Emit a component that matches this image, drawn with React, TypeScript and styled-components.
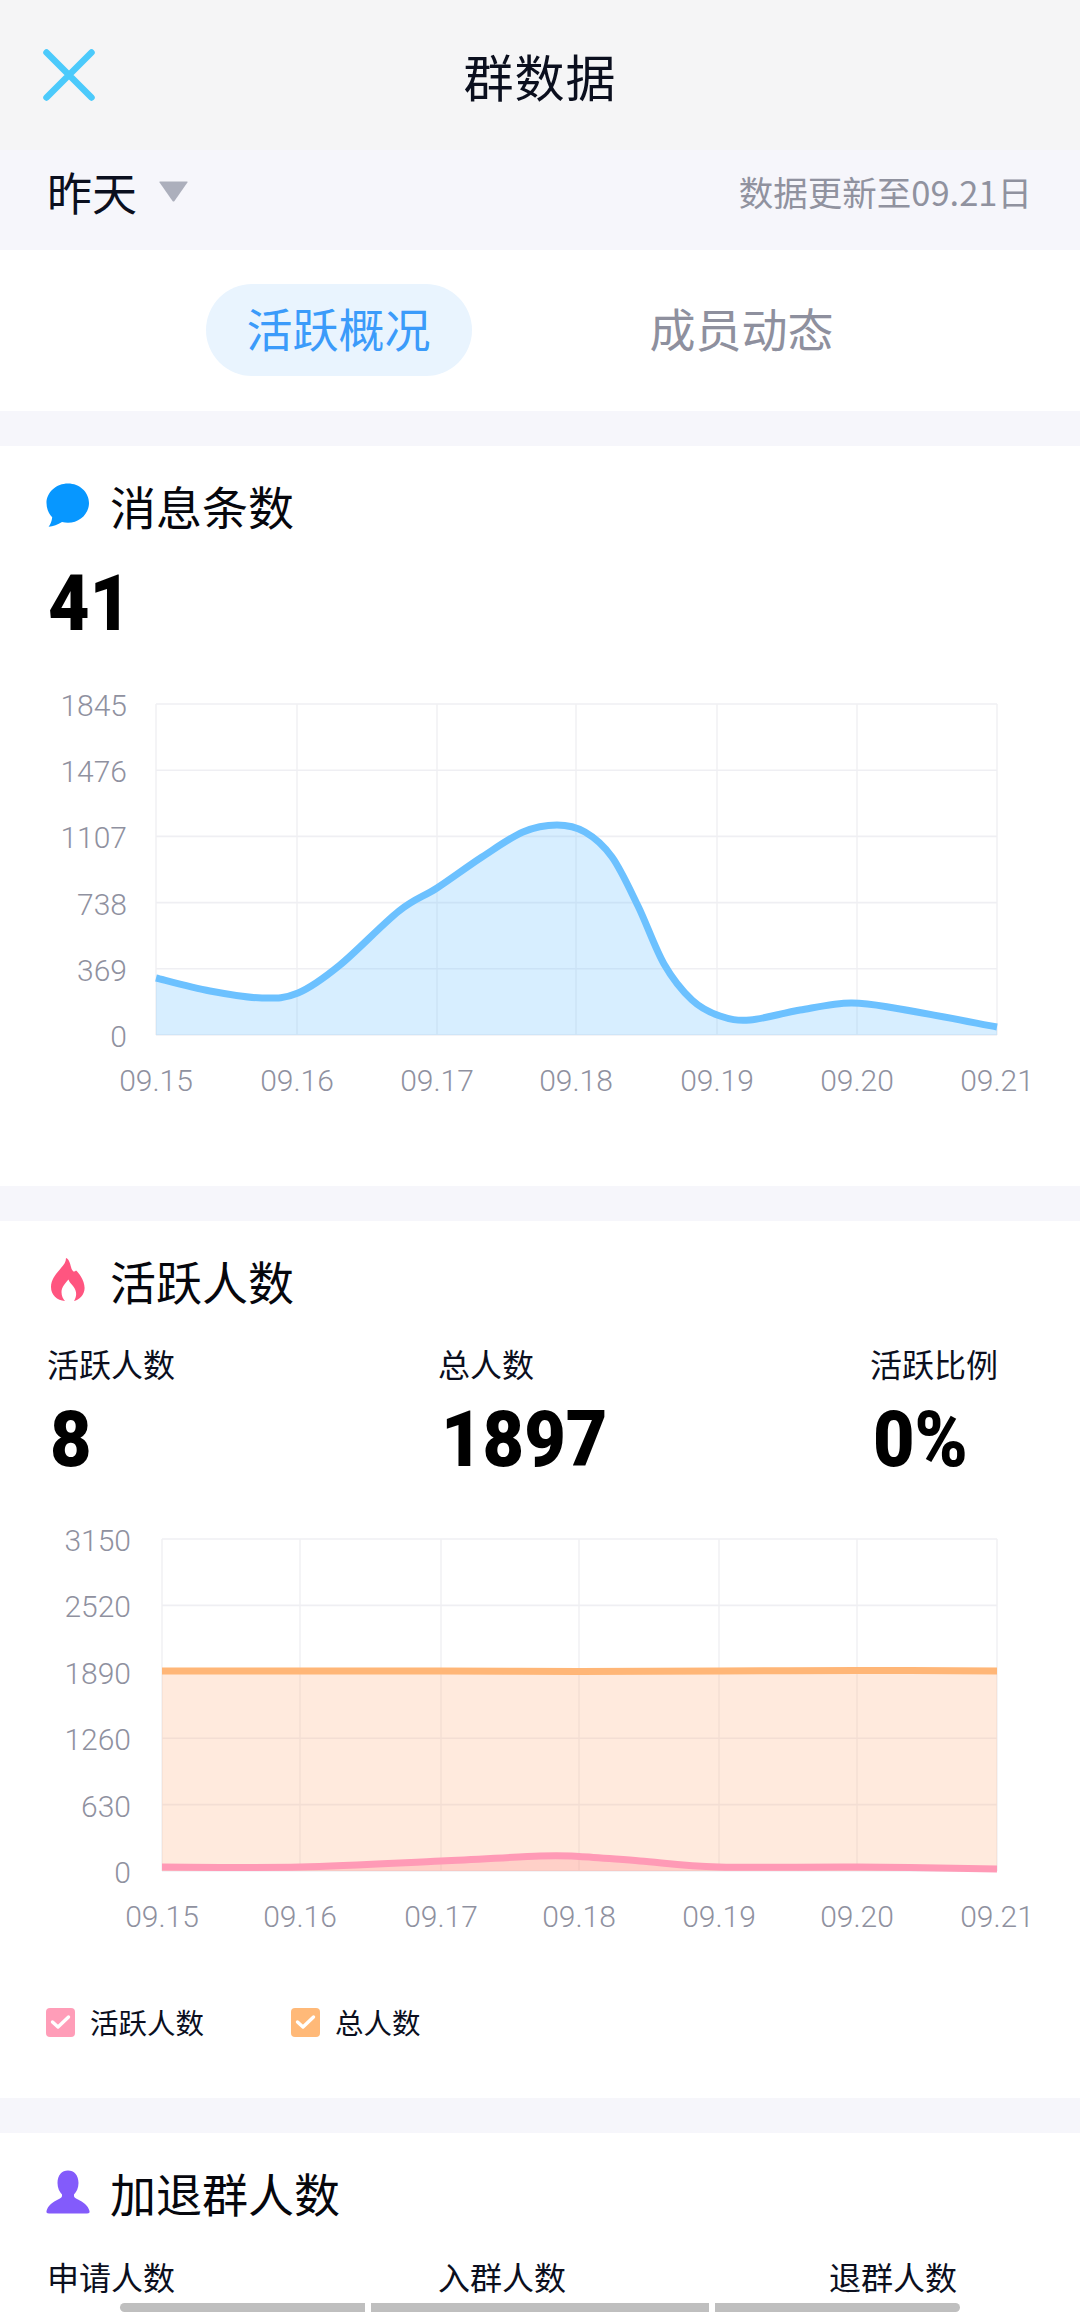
import React from 'react';
import styled, { createGlobalStyle } from 'styled-components';

const CJK = '"Noto Sans CJK SC", "Noto Sans", sans-serif';
const NUM = 'Roboto, "Liberation Sans", sans-serif';
const AXIS = 'Roboto, "Liberation Sans", sans-serif';

const Global = createGlobalStyle`
  html, body { margin: 0; padding: 0; background: #fff; }
  body { font-family: ${CJK}; color: #0b0f1e; }
  #root { width: 1080px; height: 2312px; overflow: hidden; }
`;

const Page = styled.div`
  position: relative;
  width: 1080px;
  height: 2312px;
  overflow: hidden;
  background: #f6f6fb;
`;
const Header = styled.header`
  height: 150px;
  background: #f5f5f6;
  display: flex;
  align-items: center;
  justify-content: center;
  position: relative;
`;
const CloseBtn = styled.button`
  position: absolute;
  left: 43px;
  top: 49px;
  width: 52px;
  height: 52px;
  padding: 0;
  border: 0;
  background: none;
  display: block;
`;
const HeaderTitle = styled.h1`
  margin: 0;
  font-size: 50px;
  letter-spacing: 1px;
  font-weight: 400;
  line-height: 1;
  color: #0b0f1e;
`;
const DateBar = styled.div`
  height: 100px;
  padding: 0 48px 0 47px;
  display: flex;
  align-items: center;
  justify-content: space-between;
  background: #f6f6fb;
`;
const DatePick = styled.div`
  display: flex;
  align-items: center;
  gap: 22px;
  font-size: 45px;
  line-height: 1;
  margin-bottom: 18px;
`;
const Caret = styled.svg`
  width: 29px;
  height: 21px;
  display: block;
`;
const UpdateNote = styled.span`
  font-size: 34.5px;
  color: #90929f;
  line-height: 1;
  margin-bottom: 18px;
`;
const Tabs = styled.nav`
  height: 161px;
  background: #fff;
  display: flex;
  justify-content: center;
  align-items: flex-start;
  padding-top: 34px;
  box-sizing: border-box;
  gap: 137px;
`;
const Tab = styled.div<{ $active?: boolean }>`
  height: 92px;
  box-sizing: border-box;
  padding: 0 41px 7px;
  border-radius: 46px;
  display: flex;
  align-items: center;
  font-size: 46px;
  line-height: 1;
  color: ${p => (p.$active ? '#3b9bfa' : '#8e909e')};
  background: ${p => (p.$active ? '#e9f4fe' : 'transparent')};
`;
const Card = styled.section<{ $top: number; $height: number }>`
  margin-top: ${p => p.$top}px;
  height: ${p => p.$height}px;
  background: #fff;
  box-sizing: border-box;
  padding: 34px 0 0 46px;
`;
const SectionTitle = styled.div`
  display: flex;
  align-items: center;
  gap: 20px;
  height: 50px;
  font-size: 46px;
  line-height: 1;
  color: #06070d;
`;
const TitleIcon = styled.svg`
  width: 44px;
  height: 44px;
  display: block;
  flex: none;
`;
const BigValue = styled.div`
  font-family: ${NUM};
  font-weight: 900;
  font-size: 78px;
  line-height: 60px;
  color: #000;
  transform: scaleX(0.92);
  transform-origin: left center;
`;
const SingleValue = styled(BigValue)`
  margin: 44px 0 0 2px;
`;
const ChartBox = styled.div<{ $top: number }>`
  margin: ${p => p.$top}px 0 0 -46px;
  width: 1080px;
`;
const ChartSvg = styled.svg`
  display: block;
  width: 1080px;
`;
const AxisLabel = styled.text`
  font-family: ${AXIS};
  font-size: 30px;
  font-weight: 300;
  fill: #8f919f;
`;
const Stats = styled.div`
  display: grid;
  grid-template-columns: 391px 432px 128px;
  margin: 38px 0 0 1px;
`;
const Stat = styled.div`
  display: flex;
  flex-direction: column;
`;
const StatLabel = styled.div`
  font-size: 32px;
  line-height: 40px;
  color: #0b0f1e;
`;
const StatValue = styled(BigValue)`
  margin: 27px 0 0 3px;
`;
const Legend = styled.div`
  display: flex;
  gap: 87px;
  margin-top: 53px;
`;
const LegendItem = styled.div`
  display: flex;
  align-items: center;
  gap: 15px;
  font-size: 28.5px;
  line-height: 30px;
  color: #0b0f1e;
`;
const Swatch = styled.span<{ $color: string }>`
  width: 29px;
  height: 29px;
  border-radius: 4px;
  background: ${p => p.$color};
  display: flex;
  align-items: center;
  justify-content: center;
`;
const TinyCheck = styled.svg`
  width: 21px;
  height: 16px;
  display: block;
`;
const JoinLabels = styled.div`
  display: flex;
  gap: 263px;
  margin: 39px 0 0 1px;
`;
const Scrollbar = styled.div`
  position: absolute;
  left: 120px;
  bottom: 0;
  display: flex;
  gap: 6px;
`;
const ScrollSeg = styled.span<{ $w: number; $l?: boolean; $r?: boolean }>`
  display: block;
  height: 9px;
  width: ${p => p.$w}px;
  background: #bfbfbf;
  border-radius: ${p => (p.$l ? '5px' : '0')} ${p => (p.$r ? '5px' : '0')} ${p => (p.$r ? '5px' : '0')} ${p => (p.$l ? '5px' : '0')};
`;

type Pt = [number, number];

const smooth = (pts: Pt[]) => {
  let d = `M${pts[0][0]} ${pts[0][1]}`;
  for (let i = 0; i < pts.length - 1; i++) {
    const p0 = pts[Math.max(0, i - 1)];
    const p1 = pts[i];
    const p2 = pts[i + 1];
    const p3 = pts[Math.min(pts.length - 1, i + 2)];
    const c1x = p1[0] + (p2[0] - p0[0]) / 6;
    const c1y = p1[1] + (p2[1] - p0[1]) / 6;
    const c2x = p2[0] - (p3[0] - p1[0]) / 6;
    const c2y = p2[1] - (p3[1] - p1[1]) / 6;
    d += ` C${c1x.toFixed(1)} ${c1y.toFixed(1)} ${c2x.toFixed(1)} ${c2y.toFixed(1)} ${p2[0]} ${p2[1]}`;
  }
  return d;
};

const DATES = ['09.15', '09.16', '09.17', '09.18', '09.19', '09.20', '09.21'];

interface Series {
  pts: Pt[];
  stroke: string;
  fill: string;
  width: number;
}

interface ChartProps {
  originY: number;
  height: number;
  top: number;
  bottom: number;
  xs: number[];
  yLabels: string[];
  labelRight: number;
  dateY: number;
  series: Series[];
}

const Chart = ({ originY, height, top, bottom, xs, yLabels, labelRight, dateY, series }: ChartProps) => {
  const t = top - originY;
  const b = bottom - originY;
  const step = (b - t) / (yLabels.length - 1);
  const left = xs[0];
  const right = xs[xs.length - 1];
  return (
    <ChartSvg height={height} viewBox={`0 0 1080 ${height}`}>
      {yLabels.map((_, i) => (
        <line key={i} x1={left} x2={right} y1={t + step * i} y2={t + step * i} stroke="#efeff3" strokeWidth={1.6} />
      ))}
      {xs.map(x => (
        <line key={x} x1={x} x2={x} y1={t} y2={b} stroke="#efeff3" strokeWidth={1.4} />
      ))}
      {yLabels.map((l, i) => (
        <AxisLabel key={l} x={labelRight} y={t + step * i + 12} textAnchor="end">{l}</AxisLabel>
      ))}
      {DATES.map((l, i) => (
        <AxisLabel key={l} x={xs[i]} y={dateY - originY + 11} textAnchor="middle">{l}</AxisLabel>
      ))}
      {series.map((s, i) => {
        const local: Pt[] = s.pts.map(([x, y]) => [x, y - originY]);
        const line = smooth(local);
        return (
          <g key={i}>
            <path d={`${line} L${right} ${b} L${left} ${b} Z`} fill={s.fill} />
            <path d={line} fill="none" stroke={s.stroke} strokeWidth={s.width} />
          </g>
        );
      })}
    </ChartSvg>
  );
};

const MESSAGE_PTS: Pt[] = [
  [156, 979], [210, 992], [262, 999], [298, 994], [340, 966], [399, 912], [437, 889],
  [482, 858], [523, 833], [557, 826], [585, 833], [612, 858], [638, 907], [664, 965],
  [692, 1001], [720, 1017], [750, 1021], [800, 1011], [851, 1004], [900, 1010], [997, 1028],
];
const TOTAL_PTS: Pt[] = [
  [162, 1672], [300, 1672], [441, 1672], [579, 1672.5], [719, 1672], [857, 1671.5], [997, 1672],
];
const ACTIVE_PTS: Pt[] = [
  [162, 1868], [300, 1868], [441, 1862], [540, 1857], [579, 1857.5], [640, 1862], [719, 1868],
  [857, 1868], [997, 1870],
];

const MESSAGE_XS = [156, 297, 437, 576, 717, 857, 997];
const ACTIVE_XS = [162, 300, 441, 579, 719, 857, 997];

const Check = () => (
  <TinyCheck viewBox="0 0 21 16">
    <path d="M2.5 8 L8 13 L18.5 3" fill="none" stroke="#fff" strokeWidth="3.4" strokeLinecap="round" strokeLinejoin="round" />
  </TinyCheck>
);

export default function App() {
  return (
    <Page>
      <Global />
      <Header>
        <CloseBtn aria-label="关闭">
          <svg width="52" height="52" viewBox="0 0 52 52">
            <path d="M3.5 3.5 L48.5 48.5 M48.5 3.5 L3.5 48.5" stroke="#4ccafb" strokeWidth="6.5" strokeLinecap="round" fill="none" />
          </svg>
        </CloseBtn>
        <HeaderTitle>群数据</HeaderTitle>
      </Header>
      <DateBar>
        <DatePick>
          昨天
          <Caret viewBox="0 0 29 21">
            <path d="M1 0.5 H28 Q29 0.5 28.4 1.6 L15.5 20 Q14.5 21 13.5 20 L0.6 1.6 Q0 0.5 1 0.5 Z" fill="#acafbc" />
          </Caret>
        </DatePick>
        <UpdateNote>数据更新至09.21日</UpdateNote>
      </DateBar>
      <Tabs>
        <Tab $active>活跃概况</Tab>
        <Tab>成员动态</Tab>
      </Tabs>

      <Card $top={35} $height={740}>
        <SectionTitle>
          <TitleIcon viewBox="0 0 44 44">
            <path d="M22 .5 C33.6 .5 43 9.2 43 20 C43 30.8 33.6 39.8 22 39.8 C20 39.8 18 39.6 16 39 C12 41.6 7 43.4 2.6 43.8 C4.6 41 5.8 38 6.2 34.2 C2.6 30.6 .5 25.6 .5 20 C.5 9.2 10.4 .5 22 .5 Z" fill="#0797ff" />
          </TitleIcon>
          消息条数
        </SectionTitle>
        <SingleValue>41</SingleValue>
        <ChartBox $top={48}>
          <Chart
            originY={683}
            height={430}
            top={705}
            bottom={1036}
            xs={MESSAGE_XS}
            yLabels={['1845', '1476', '1107', '738', '369', '0']}
            labelRight={127}
            dateY={1081}
            series={[{ pts: MESSAGE_PTS, stroke: '#6cc1ff', fill: 'rgba(108,193,255,.27)', width: 7 }]}
          />
        </ChartBox>
      </Card>

      <Card $top={35} $height={877}>
        <SectionTitle>
          <TitleIcon viewBox="0 0 44 44">
            <path d="M20 0 C23 1 24 5 25 9 C26 13 28 15 30 12.5 C32 14 38.6 22 38.6 30 C38.6 37 33 42 28 43 C31 38 31 33 27 28 C25.5 26 23 24 22.5 21.5 C19.5 25 15.5 29 15.5 34 C15.5 38 17 41 19 43 C11 42.5 5 37 5 29 C5 21 11 15 15 10 C18 6.5 20 4 20 0 Z" fill="#ff5580" />
          </TitleIcon>
          活跃人数
        </SectionTitle>
        <Stats>
          <Stat>
            <StatLabel>活跃人数</StatLabel>
            <StatValue>8</StatValue>
          </Stat>
          <Stat>
            <StatLabel>总人数</StatLabel>
            <StatValue>1897</StatValue>
          </Stat>
          <Stat>
            <StatLabel>活跃比例</StatLabel>
            <StatValue>0%</StatValue>
          </Stat>
        </Stats>
        <ChartBox $top={44}>
          <Chart
            originY={1515}
            height={440}
            top={1540}
            bottom={1872}
            xs={ACTIVE_XS}
            yLabels={['3150', '2520', '1890', '1260', '630', '0']}
            labelRight={131}
            dateY={1917}
            series={[
              { pts: TOTAL_PTS, stroke: '#ffb677', fill: 'rgba(255,172,120,.25)', width: 7 },
              { pts: ACTIVE_PTS, stroke: '#ff9ab6', fill: 'rgba(255,130,140,.25)', width: 7 },
            ]}
          />
        </ChartBox>
        <Legend>
          <LegendItem>
            <Swatch $color="#ff9db8"><Check /></Swatch>
            活跃人数
          </LegendItem>
          <LegendItem>
            <Swatch $color="#ffb978"><Check /></Swatch>
            总人数
          </LegendItem>
        </Legend>
      </Card>

      <Card $top={35} $height={180}>
        <SectionTitle>
          <TitleIcon viewBox="0 0 44 44">
            <path d="M22 .5 C28 .5 32.5 5 32.5 13 C32.5 18 30.5 22 28 24.5 C27.5 27 29 28 32 29.5 C37 32 42 35 43.5 41 Q44 43.5 41 43.5 H3 Q0 43.5 .5 41 C2 35 7 32 12 29.5 C15 28 16.5 27 16 24.5 C13.5 22 11.5 18 11.5 13 C11.5 5 16 .5 22 .5 Z" fill="#835bfb" />
          </TitleIcon>
          加退群人数
        </SectionTitle>
        <JoinLabels>
          <StatLabel>申请人数</StatLabel>
          <StatLabel>入群人数</StatLabel>
          <StatLabel>退群人数</StatLabel>
        </JoinLabels>
      </Card>

      <Scrollbar>
        <ScrollSeg $w={245} $l />
        <ScrollSeg $w={338} />
        <ScrollSeg $w={245} $r />
      </Scrollbar>
    </Page>
  );
}
